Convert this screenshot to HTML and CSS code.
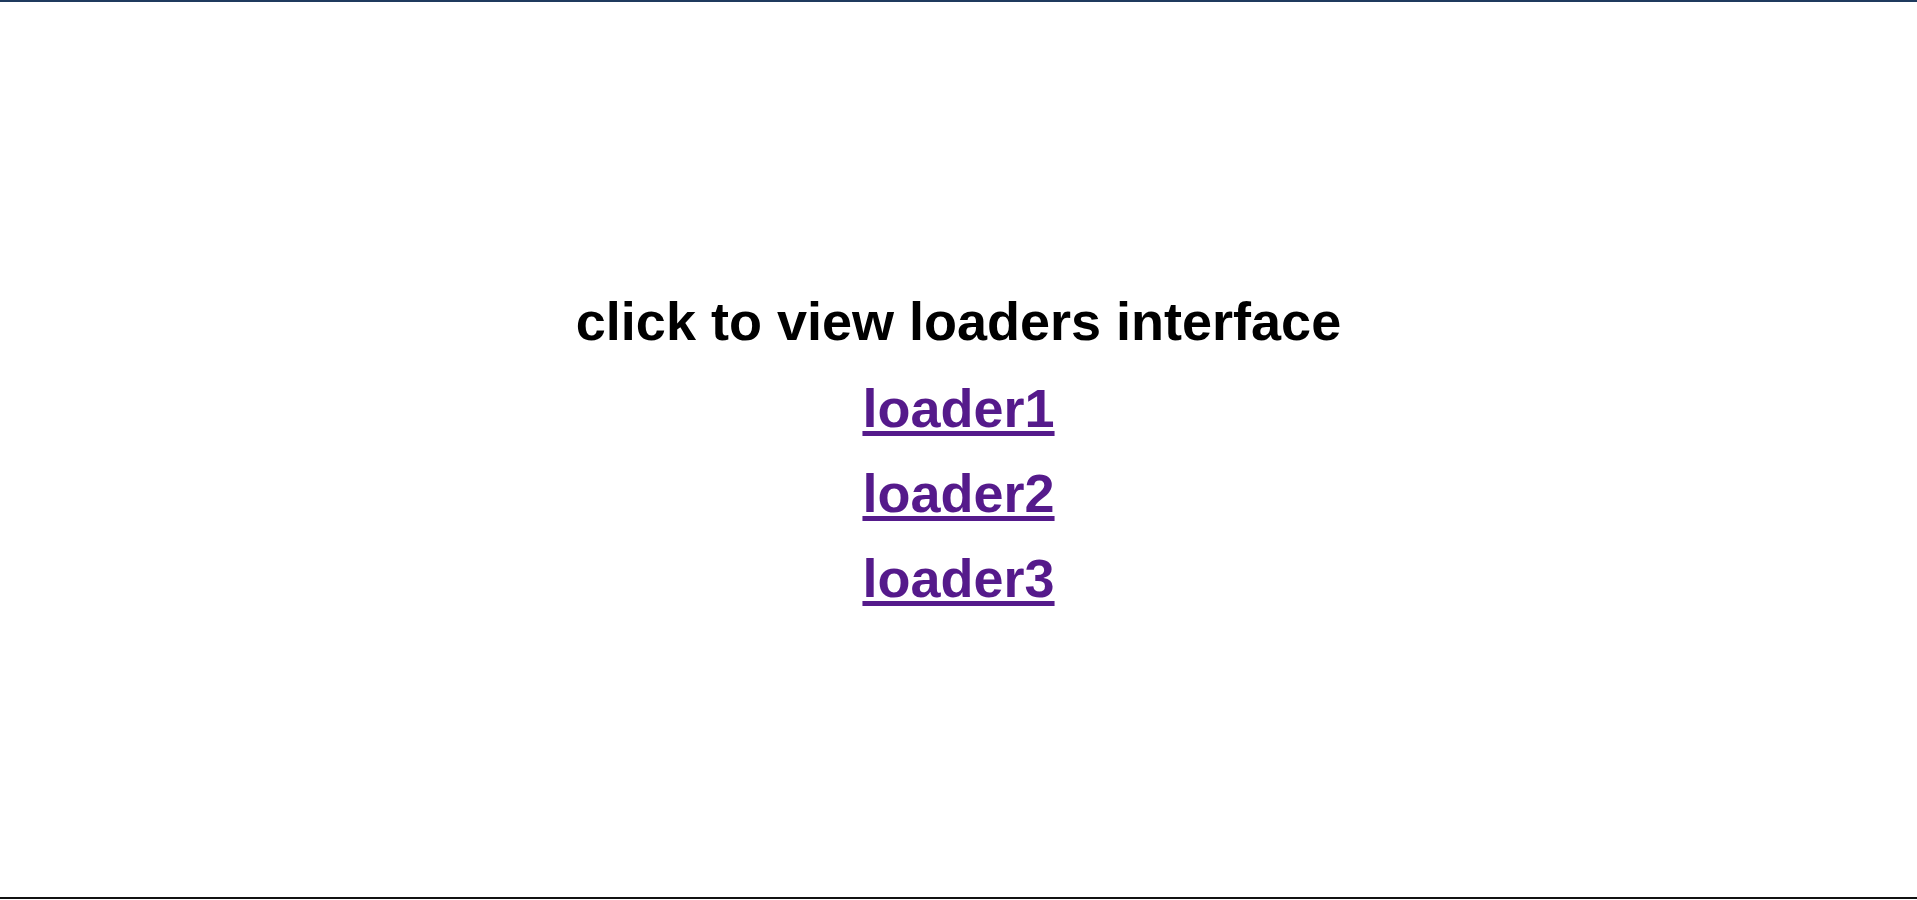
FILE: index.html
```html
<!DOCTYPE html>
<html lang="en">
<head>
<meta charset="utf-8">
<title>Loaders</title>
<link rel="stylesheet" href="styles.css">
</head>
<body>
<div class="frame">
  <main class="menu">
    <h1 class="title">click to view loaders interface</h1>
    <a class="loader-link" href="#loader1">loader1</a>
    <a class="loader-link" href="#loader2">loader2</a>
    <a class="loader-link" href="#loader3">loader3</a>
  </main>
</div>
</body>
</html>
```

FILE: styles.css
```css
html, body {
  margin: 0;
  padding: 0;
  background: #ffffff;
}

body {
  font-family: "Liberation Sans", Arial, sans-serif;
}

.frame {
  box-sizing: border-box;
  height: calc(100vh - 1px);
  border-top: 2px solid #1f3a5e;
  border-bottom: 2px solid #111111;
  display: flex;
  align-items: center;
  justify-content: center;
}

.menu {
  display: flex;
  flex-direction: column;
  align-items: center;
  gap: 23px;
}

.title {
  margin: 0 0 2px;
  font-size: 54px;
  line-height: 62px;
  font-weight: 700;
  color: #000000;
}

.loader-link {
  display: block;
  font-size: 54px;
  line-height: 62px;
  font-weight: 700;
  color: #551a8b;
  text-decoration: underline;
  text-decoration-thickness: 5px;
  text-underline-offset: 4px;
}
```
